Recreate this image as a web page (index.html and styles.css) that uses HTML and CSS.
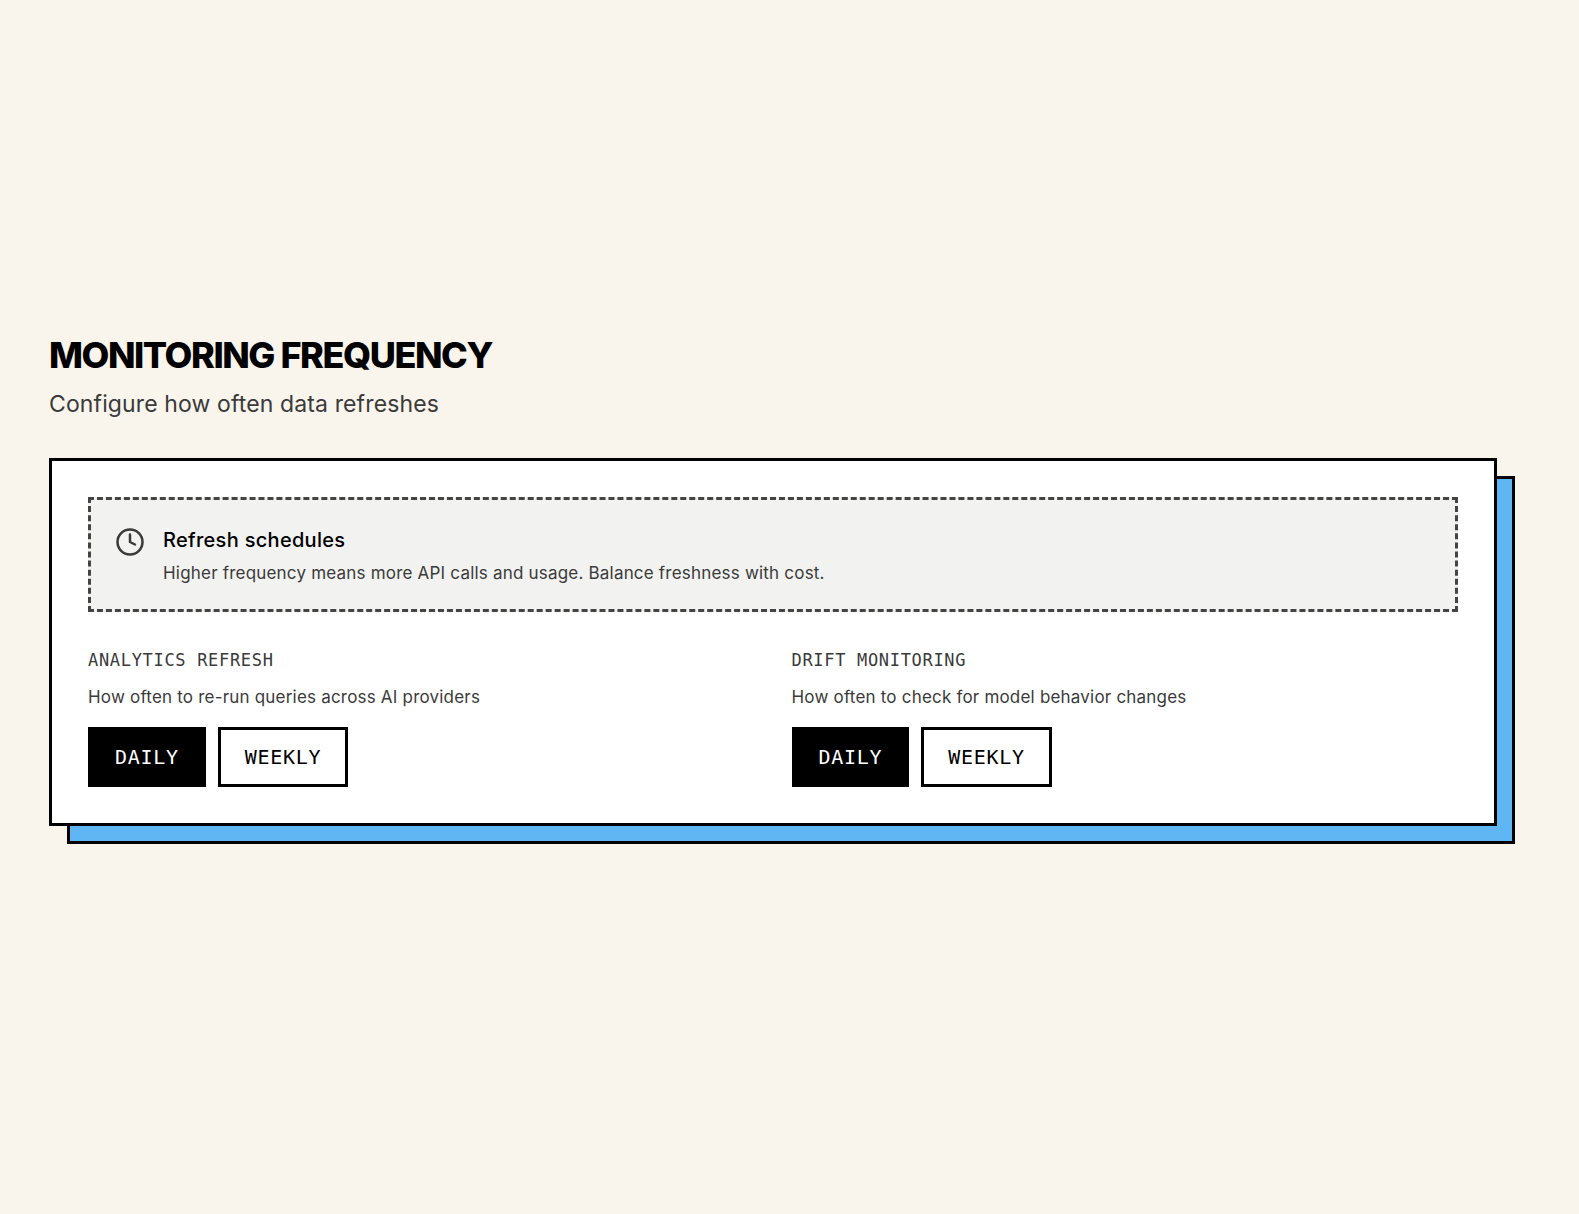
FILE: index.html
```html
<!DOCTYPE html>
<html lang="en">
  <head>
    <meta charset="UTF-8" />
    <title>Monitoring frequency</title>
    <link rel="stylesheet" href="styles.css">
  </head>
  <body>
    <main class="page">
      <h1 class="title">MONITORING FREQUENCY</h1>
      <p class="subtitle">Configure how often data refreshes</p>

      <section class="card">
        <div class="notice">
          <svg class="notice-icon" viewBox="0 0 24 24" fill="none" stroke="currentColor" stroke-width="2" stroke-linecap="round" stroke-linejoin="round">
            <circle cx="12" cy="12" r="10" />
            <polyline points="12 6 12 12 16 14" />
          </svg>
          <div>
            <h2 class="notice-title">Refresh schedules</h2>
            <p class="notice-text">Higher frequency means more API calls and usage. Balance freshness with cost.</p>
          </div>
        </div>

        <div class="settings">
          <div class="setting">
            <h3 class="setting-label">ANALYTICS REFRESH</h3>
            <p class="setting-text">How often to re-run queries across AI providers</p>
            <div class="options">
              <button class="option active">DAILY</button>
              <button class="option">WEEKLY</button>
            </div>
          </div>
          <div class="setting">
            <h3 class="setting-label">DRIFT MONITORING</h3>
            <p class="setting-text">How often to check for model behavior changes</p>
            <div class="options">
              <button class="option active">DAILY</button>
              <button class="option">WEEKLY</button>
            </div>
          </div>
        </div>
      </section>
    </main>
  </body>
</html>
```

FILE: styles.css
```css
* {
  box-sizing: border-box;
}

body {
  background: #f9f5ed;
  color: #000;
  font-family: Inter, "Liberation Sans", sans-serif;
  margin: 0;
  min-height: 100vh;
}

.page {
  padding: 331px 0 0 49px;
  width: 1497px;
}

.title {
  font-size: 36px;
  font-weight: 800;
  letter-spacing: -0.04em;
  line-height: 48px;
  margin: 0;
}

.subtitle {
  color: #3a3a3a;
  font-size: 23px;
  letter-spacing: 0.12px;
  line-height: 32px;
  margin: 9px 0 38px;
}

.card {
  background: #fff;
  border: 3px solid #000;
  padding: 36px;
  position: relative;
}

.card::before {
  background: #5fb6f2;
  border: 3px solid #000;
  content: "";
  inset: 15px -21px -21px 15px;
  position: absolute;
  z-index: -1;
}

.notice {
  background: #f2f2f0;
  border: 3px dashed #444;
  color: #3a3a3a;
  display: flex;
  gap: 18px;
  padding: 26px 24px 23px;
}

.notice-icon {
  flex: none;
  height: 30px;
  margin-top: 1px;
  width: 30px;
}

.notice-title {
  color: #000;
  font-size: 20px;
  font-weight: 500;
  letter-spacing: 0.3px;
  line-height: 28px;
  margin: 0 0 6px;
}

.notice-text {
  font-size: 17px;
  letter-spacing: 0.2px;
  line-height: 26px;
  margin: 0;
}

.settings {
  display: grid;
  gap: 37px;
  grid-template-columns: 1fr 1fr;
  margin-top: 35px;
}

.setting-label {
  color: #3a3a3a;
  font-family: "DejaVu Sans Mono", monospace;
  font-size: 17px;
  font-weight: 400;
  letter-spacing: 0.04em;
  line-height: 26px;
  margin: 0;
}

.setting-text {
  color: #3a3a3a;
  font-size: 17px;
  letter-spacing: 0.2px;
  line-height: 26px;
  margin: 11px 0 17px;
}

.options {
  display: flex;
  gap: 12px;
}

.option {
  background: #fff;
  border: 3px solid #000;
  color: #000;
  font-family: "DejaVu Sans Mono", monospace;
  font-size: 20px;
  height: 60px;
  letter-spacing: 0.7px;
  padding: 0 24px;
}

.option.active {
  background: #000;
  color: #fff;
}
```
